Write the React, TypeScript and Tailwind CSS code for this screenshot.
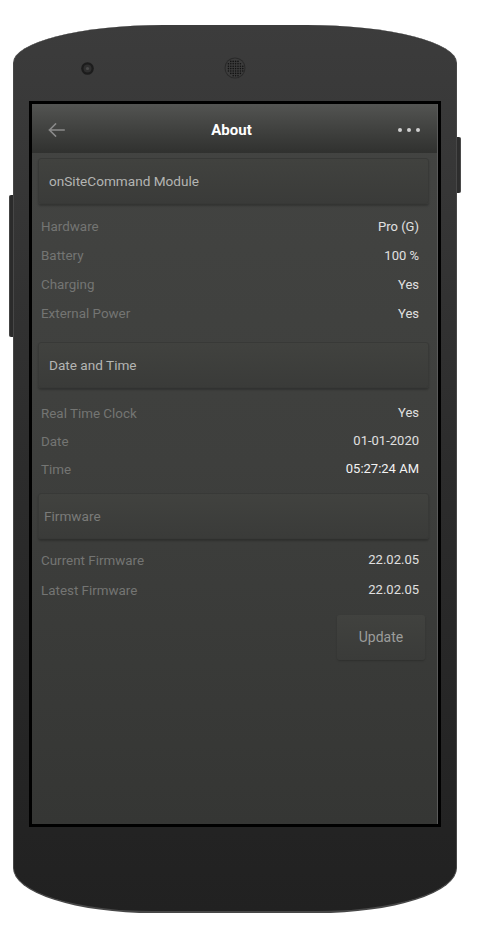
import React from "react";

type Item = { label: string; value: string; strong?: boolean };

const MODULE_ROWS: Item[] = [
  { label: "Hardware", value: "Pro (G)" },
  { label: "Battery", value: "100 %" },
  { label: "Charging", value: "Yes" },
  { label: "External Power", value: "Yes" },
];

const TIME_ROWS: Item[] = [
  { label: "Real Time Clock", value: "Yes" },
  { label: "Date", value: "01-01-2020" },
  { label: "Time", value: "05:27:24 AM", strong: true },
];

const FIRMWARE_ROWS: Item[] = [
  { label: "Current Firmware", value: "22.02.05" },
  { label: "Latest Firmware", value: "22.02.05" },
];

function SectionHeader({ title, dim }: { title: string; dim?: boolean }) {
  return (
    <div
      className={
        "ml-[6px] mr-[8px] h-[46px] flex items-center rounded-[3px] border border-[#383937] bg-linear-to-b from-[#41423f] to-[#3a3b39] shadow-[0_2px_2px_rgba(0,0,0,0.22)] text-[13.6px] " +
        (dim ? "pl-[5px] text-[#7a7b79]" : "pl-[10px] text-[#b4b5b3]")
      }
    >
      {title}
    </div>
  );
}

function Rows({ items, rowClass }: { items: Item[]; rowClass: string }) {
  return (
    <div>
      {items.map((it) => (
        <div key={it.label} className={"flex items-center justify-between pl-[9px] pr-[18px] " + rowClass}>
          <span className="text-[13.4px] leading-[18px] pt-[1px] text-[#747573]">{it.label}</span>
          <span className={"text-[13px] leading-[18px] " + (it.strong ? "text-[#f2f2f2]" : "text-[#e0e0e0]")}>{it.value}</span>
        </div>
      ))}
    </div>
  );
}

function Speaker() {
  const dots: React.ReactNode[] = [];
  for (let y = -9; y <= 9; y += 2.4) {
    for (let x = -9; x <= 9; x += 2.4) {
      if (x * x + y * y < 70) dots.push(<circle key={x + "_" + y} cx={11 + x} cy={11 + y} r={0.8} fill="#121212" />);
    }
  }
  return (
    <svg width="22" height="22" viewBox="0 0 22 22">
      <circle cx="11" cy="11" r="10.5" fill="#2a2a2a" />
      <circle cx="11" cy="11" r="9.5" fill="#3c3c3c" />
      {dots}
    </svg>
  );
}

function Camera() {
  return (
    <svg width="13" height="13" viewBox="0 0 13 13">
      <circle cx="6.5" cy="6.5" r="6.3" fill="#1c1c1c" />
      <circle cx="6.5" cy="6.5" r="4" fill="#2f2f2f" />
      <circle cx="6.5" cy="6.5" r="1.6" fill="#4a4a4a" />
    </svg>
  );
}

export default function App() {
  return (
    <div className="w-[484px] h-[943px] bg-white pt-[25px] pl-[13px] font-['Roboto','Liberation_Sans',sans-serif]">
      <div className="relative w-[444px] h-[888px]">
        {/* side buttons */}
        <div className="absolute -left-[4px] top-[170px] w-[4px] h-[142px] rounded-l-[2px] bg-[#2b2b2b] border-l border-[#444]" />
        <div className="absolute -right-[4px] top-[112px] w-[4px] h-[56px] rounded-r-[2px] bg-[#2d2d2d] border-r border-[#4a4a4a]" />

        <div className="w-full h-full rounded-tl-[150px_38px] rounded-tr-[150px_38px] rounded-bl-[140px_45px] rounded-br-[140px_45px] border-x border-b-2 border-[#474747] border-t-0 bg-linear-to-b from-[#3c3c3c] via-[#2c2c2c] to-[#212121]">
          {/* top bezel */}
          <div className="h-[76px] flex items-center pt-[10px] pl-[67px]">
            <Camera />
            <div className="ml-[130px]">
              <Speaker />
            </div>
          </div>

          {/* screen */}
          <div className="mx-[15px] h-[726px] border-[3px] border-black">
            <div className="h-full flex flex-col border-r border-[#5a5a5a] bg-linear-to-b from-[#434442] via-[#3e3f3d] to-[#353634]">
              {/* app bar */}
              <div className="h-[49px] shrink-0 flex items-center justify-between pt-[3px] px-[16px] bg-linear-to-b from-[#535452] to-[#30312f]">
                <svg width="17" height="14" viewBox="0 0 17 14" className="shrink-0">
                  <path d="M16 7H1.5M7.5 1L1.5 7l6 6" fill="none" stroke="#8a8a8a" strokeWidth="1.6" strokeLinecap="square" />
                </svg>
                <span className="text-white font-bold text-[15px]">About</span>
                <div className="flex items-center gap-[5px] pr-[1px]">
                  <span className="w-[4px] h-[4px] rounded-full bg-[#cfcfcf]" />
                  <span className="w-[4px] h-[4px] rounded-full bg-[#cfcfcf]" />
                  <span className="w-[4px] h-[4px] rounded-full bg-[#cfcfcf]" />
                </div>
              </div>

              <div className="pt-[5px]">
                <SectionHeader title="onSiteCommand Module" />
                <div className="mt-[8px]">
                  <Rows items={MODULE_ROWS} rowClass="h-[29px]" />
                </div>

                <div className="mt-[14px]">
                  <SectionHeader title="Date and Time" />
                </div>
                <div className="mt-[11px]">
                  <Rows items={TIME_ROWS} rowClass="h-[28px]" />
                </div>

                <div className="mt-[10px]">
                  <SectionHeader title="Firmware" dim />
                </div>
                <div className="mt-[6px]">
                  <Rows items={FIRMWARE_ROWS} rowClass="h-[30px]" />
                </div>

                <div className="mt-[10px] flex justify-end pr-[12px]">
                  <button className="w-[88px] h-[45px] rounded-[3px] bg-linear-to-b from-[#41423f] to-[#3a3b39] shadow-[0_1px_2px_rgba(0,0,0,0.2)] text-[14px] text-[#9c9d9b]">
                    Update
                  </button>
                </div>
              </div>
            </div>
          </div>
        </div>
      </div>
    </div>
  );
}
